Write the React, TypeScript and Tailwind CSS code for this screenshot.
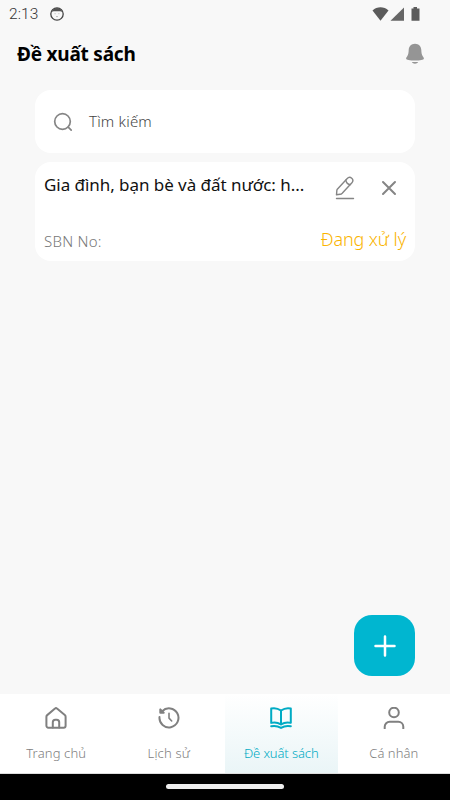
import type { ReactNode } from "react";
import clsx from "clsx";

type IconProps = { className?: string; children: ReactNode; box?: string };

function Icon({ className, children, box = "0 0 22 22" }: IconProps) {
  return (
    <svg
      viewBox={box}
      fill="none"
      stroke="currentColor"
      strokeWidth={2}
      strokeLinecap="round"
      strokeLinejoin="round"
      className={clsx("shrink-0", className)}
    >
      {children}
    </svg>
  );
}

const tabs = [
  {
    label: "Trang chủ",
    spacing: "tracking-[0.15px]",
    icon: (
      <>
        <path d="M1.400 9.700c0-.7.300-1.200.8-1.600L10 1.600a1.500 1.500 0 0 1 2 0l7.800 6.500c.5.400.8.900.8 1.600v9.100a1.900 1.900 0 0 1-1.900 1.900H3.300a1.900 1.900 0 0 1-1.900-1.900Z" />
        <path d="M7.800 20.500v-5.300a2.500 2.500 0 0 1 2.500-2.500h1.400a2.500 2.500 0 0 1 2.500 2.500v5.300" />
      </>
    ),
  },
  {
    label: "Lịch sử",
    spacing: "tracking-[0.15px]",
    icon: (
      <>
        <path d="M4.200 4.200A9.500 9.500 0 1 1 1.500 10" />
        <path d="M2.300 2.400v3.300h3.400Z" fill="currentColor" />
        <path d="M11 6.200v4.900l2.700 2.900" strokeWidth={1.6} />
      </>
    ),
  },
  {
    label: "Đề xuất sách",
    spacing: "tracking-[-0.1px]",
    active: true,
    icon: (
      <>
        <path d="M11 3.500C7.900 1.300 4.400.8 1.200 1.500v14.400c3.500-.8 6.800-.3 9.800 1.500 3-1.800 6.300-2.300 9.800-1.500V1.500C17.600.8 14.100 1.300 11 3.500Z" />
        <path d="M11 3.500v13.700" />
        <path d="M1.200 19.300c3.500-.7 6.800-.2 9.800 1.600 3-1.800 6.300-2.300 9.800-1.600" />
      </>
    ),
  },
  {
    label: "Cá nhân",
    spacing: "tracking-[0.05px]",
    icon: (
      <>
        <circle cx="11" cy="5.500" r="4.800" />
        <path d="M1.700 21.500v-1.700a5 5 0 0 1 5-5h8.600a5 5 0 0 1 5 5v1.700" />
      </>
    ),
  },
];

function StatusBar() {
  return (
    <div className="flex h-7 items-center pl-[9px] pr-[29px] text-[#333]">
      <span className="w-[41px] pt-[2px] font-['Roboto'] text-[15.500px] font-light tracking-[0.1px]">2:13</span>
      <svg viewBox="0 0 14 14" className="h-[14px] w-[14px]">
        <circle cx="7" cy="7" r="6.200" fill="none" stroke="#444" strokeWidth="1.300" />
        <path d="M2 5C2.500 2 4.500 1 7 1s4.500 1 5 4l-1.500-.8H3.500Z" fill="#555" />
        <path d="M4.700 6.700h.8M8.500 6.700h.8M6.200 9.600h1.600" stroke="#999" strokeWidth=".8" />
      </svg>
      <div className="ml-auto flex items-center pb-px">
        <svg viewBox="0 0 17 14" className="h-[14px] w-[17px] fill-[#5b5b5b]">
          <path d="M.5 3.500C5-.7 12-.7 16.500 3.500L8.500 13.700Z" />
        </svg>
        <svg viewBox="0 0 14 14" className="ml-px h-[14px] w-[14px] fill-[#666]">
          <path d="M14 .5v13.300H.5Z" />
        </svg>
        <svg viewBox="0 0 9 14" className="ml-[7px] mr-px h-[14px] w-[9px] fill-[#5b5b5b]">
          <path d="M2.500 0h3.500v1.500h2.500v12.300H.5V1.500h2Z" />
        </svg>
      </div>
    </div>
  );
}

function Header() {
  return (
    <header className="flex h-[62px] items-start justify-between pl-[17px] pr-[25px] pt-[13px]">
      <h1 className="text-[19px] font-bold leading-[26px] tracking-[-0.22px] text-black">Đề xuất sách</h1>
      <svg viewBox="0 0 20 22" className="mt-[2px] h-[22px] w-[20px] fill-[#959595]">
        <path d="M10 .8c-3.800 0-6.200 2.800-6.300 6.300-.1 2.600-.3 4.600-1.600 6.400-.5.8-1 1.300-1 2 0 1.500 3.900 2 8.900 2s8.900-.5 8.900-2c0-.7-.5-1.200-1-2-1.300-1.800-1.500-3.800-1.600-6.400C16.200 3.600 13.800.8 10 .8Z" />
        <path d="M6.800 19.100h6.400c-.7 1.200-1.800 1.700-3.200 1.700s-2.500-.5-3.200-1.700Z" />
      </svg>
    </header>
  );
}

function BookCard() {
  return (
    <article className="flex h-[99px] flex-col justify-between rounded-[16px] bg-white pb-[8px] pl-[9px] pr-[9px] pt-[10px]">
      <div className="flex items-start">
        <h2 className="w-[265px] whitespace-nowrap text-[17px] leading-[26px] tracking-[-0.05px] text-[#111]">
          Gia đình, bạn bè và đất nước: h...
        </h2>
        <Icon box="0 0 20 24" className="ml-[26px] mt-[4px] h-[24px] w-[20px] text-[#858585] [stroke-width:1.400]">
          <path d="M2.300 13.200 12 2.700c1.500-1.600 3.200-1.800 4.700-.5s1.500 3 .2 4.600L7.200 17.200c-.7.7-1.200 1-2.100 1.100l-3.600.5.3-3.700c0-.8.1-1.300.5-1.900Z" />
          <path d="M10.800 4.100c.4 2.500 2.200 4.300 4.700 4.500M1.500 22.500h17" />
        </Icon>
        <Icon box="0 0 16 16" className="ml-[26px] mt-[8px] h-4 w-4 text-[#858585] [stroke-width:2]">
          <path d="M2 2l12 12M14 2 2 14" />
        </Icon>
      </div>
      <div className="flex items-end justify-between">
        <span className="text-[15px] font-light leading-[24px] tracking-[0.25px] text-[#777]">SBN No:</span>
        <span className="pb-[1px] text-[18px] font-light leading-[26px] tracking-[-0.1px] text-[#fab400]">Đang xử lý</span>
      </div>
    </article>
  );
}

export default function App() {
  return (
    <div className="flex h-[800px] w-[450px] flex-col overflow-hidden bg-[#f8f8f8] font-['Noto_Sans',sans-serif]">
      <StatusBar />
      <Header />
      <main className="flex flex-1 flex-col gap-[9px] px-[35px] pb-[18px]">
        <label className="flex h-[63px] items-center rounded-[16px] bg-white pl-[18px]">
          <Icon box="0 0 20 20" className="h-5 w-5 text-[#858585] [stroke-width:1.700]">
            <circle cx="9.500" cy="9.500" r="7.800" />
            <path d="m15.200 15.200 3 3" />
          </Icon>
          <span className="ml-[16px] text-[15px] font-light tracking-[0.2px] text-[#444]">Tìm kiếm</span>
        </label>
        <BookCard />
        <button className="ml-auto mt-auto flex h-[61px] w-[61px] items-center justify-center rounded-[18px] bg-[#00b6d0] text-white">
          <Icon className="h-[22px] w-[22px] [stroke-width:2.500]">
            <path d="M11 1.500v19M1.500 11h19" />
          </Icon>
        </button>
      </main>
      <nav className="grid h-[80px] grid-cols-4 border-b border-[#ddd] bg-white">
        {tabs.map((tab) => (
          <div
            key={tab.label}
            className={clsx(
              "flex flex-col items-center pt-[13px]",
              tab.active ? "bg-linear-to-b from-white to-[#eaf5f7] text-[#00abc4]" : "text-[#808080]"
            )}
          >
            <Icon className="h-[22px] w-[22px]">{tab.icon}</Icon>
            <span className={clsx("mt-[14px] whitespace-nowrap text-[13px] font-light leading-[20px]", tab.spacing)}>
              {tab.label}
            </span>
          </div>
        ))}
      </nav>
      <div className="flex h-[26px] justify-center bg-black pt-[10px]">
        <div className="h-[5px] w-[118px] rounded-full bg-[#eee]" />
      </div>
    </div>
  );
}
